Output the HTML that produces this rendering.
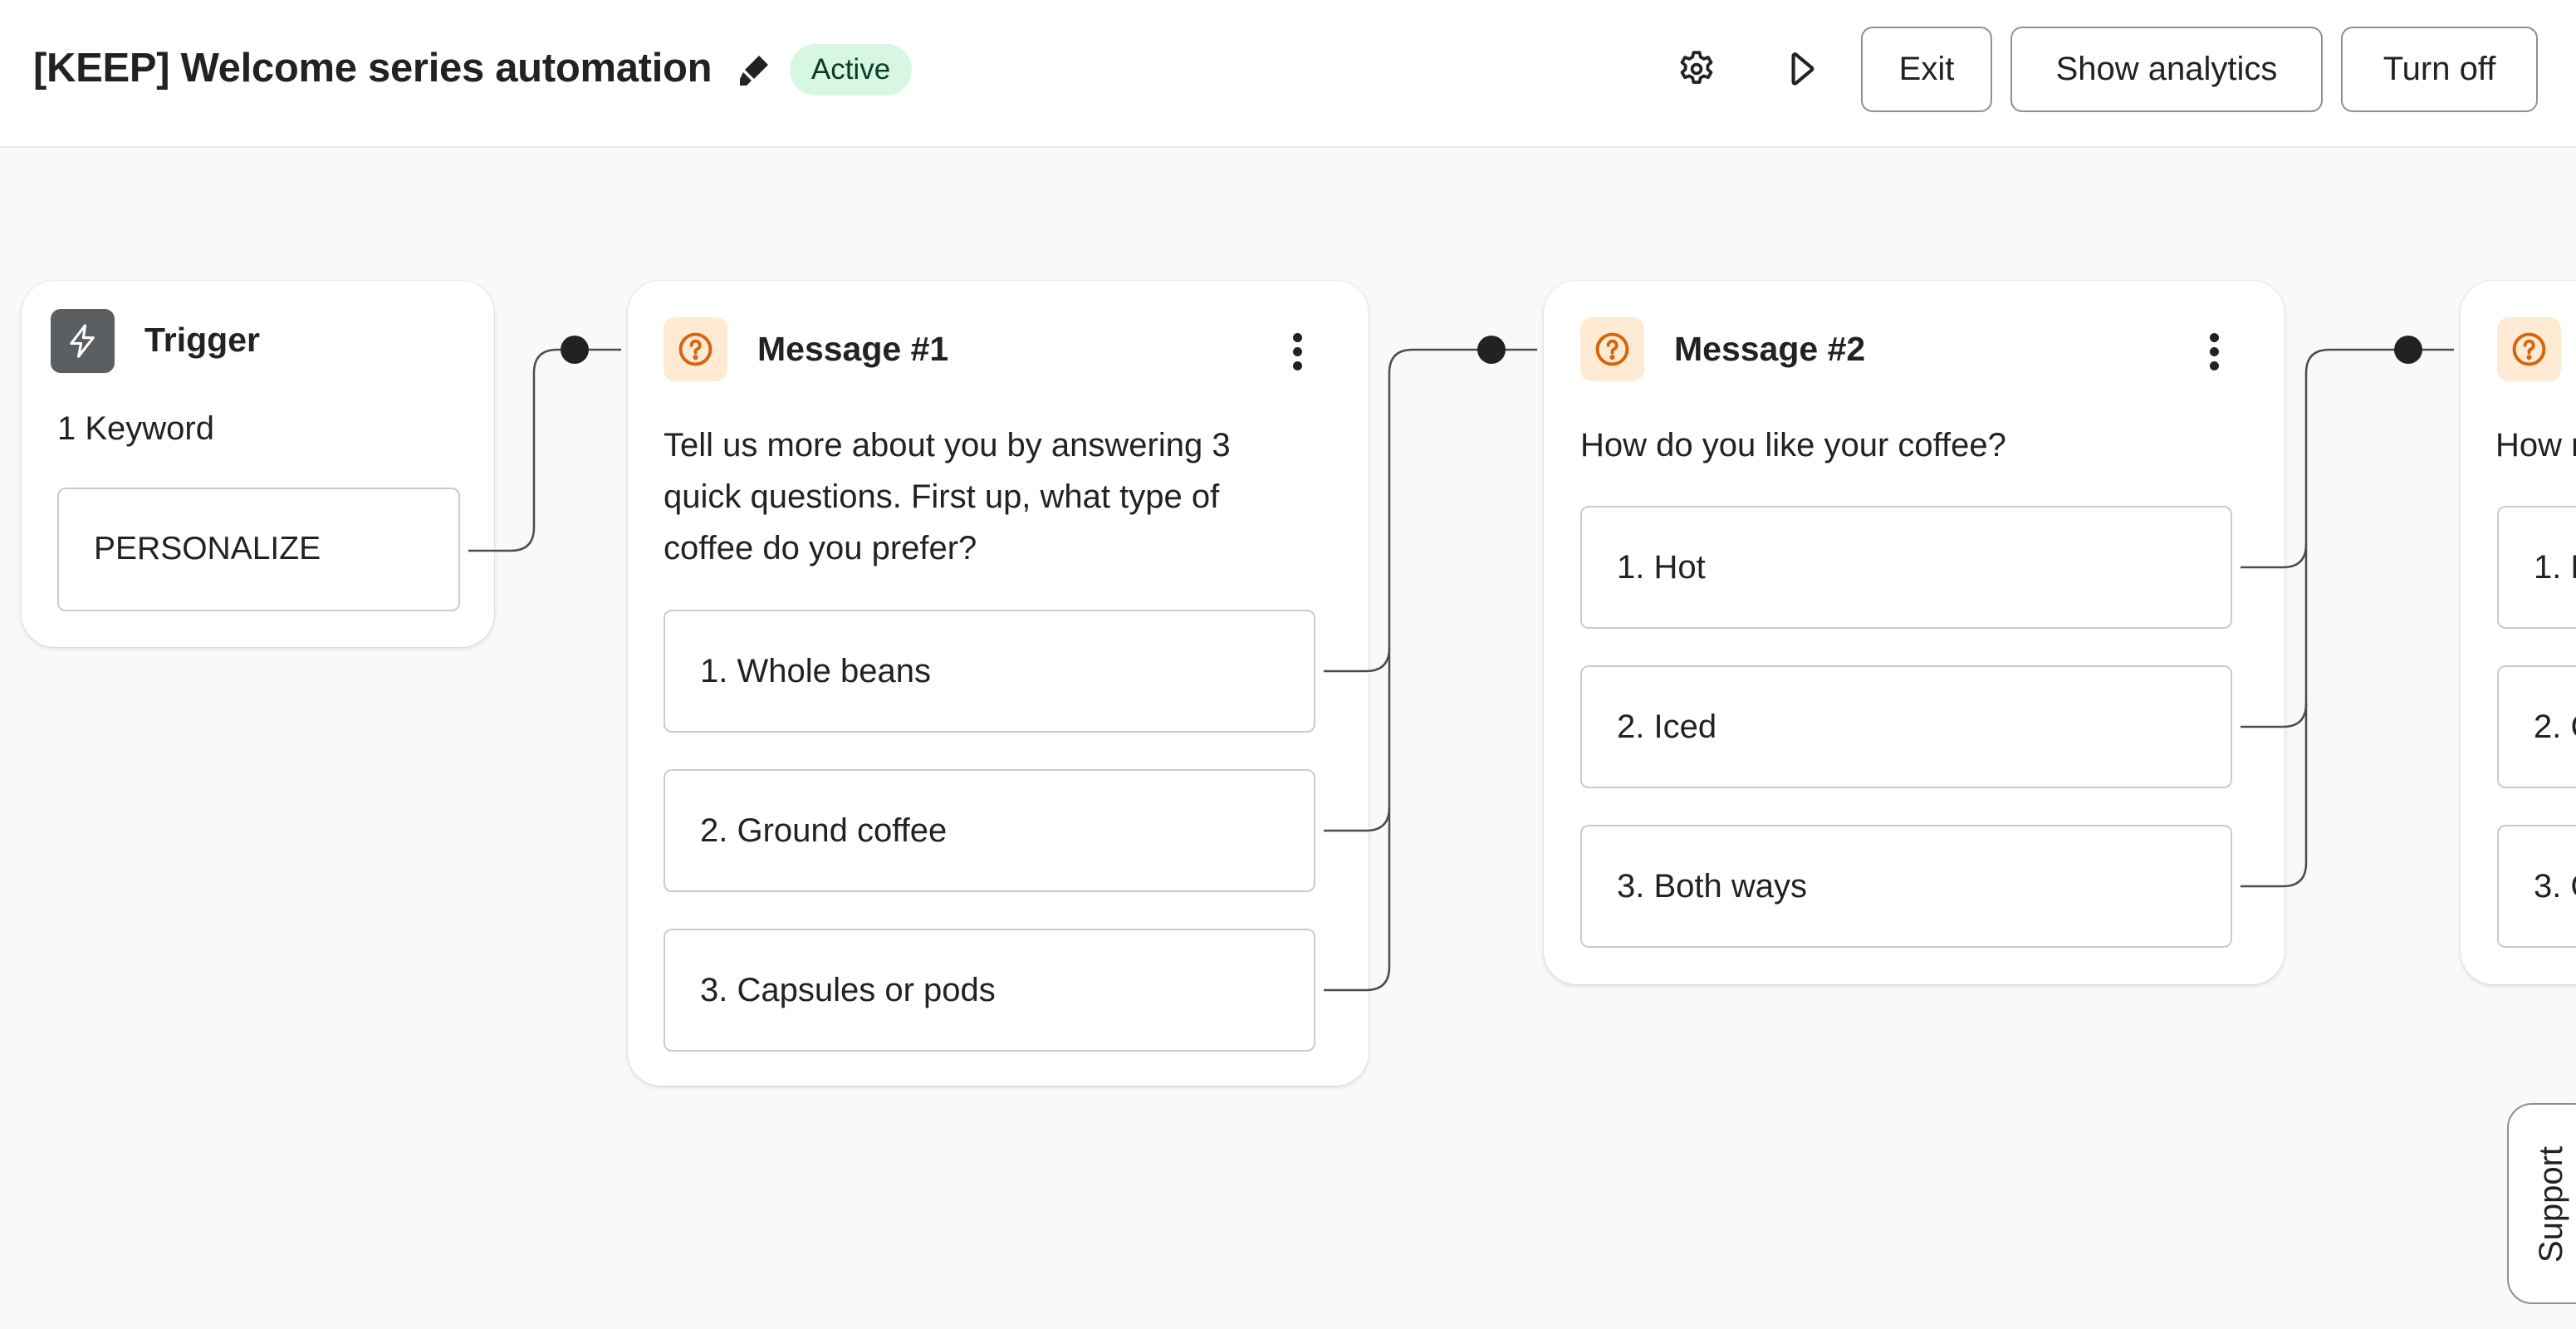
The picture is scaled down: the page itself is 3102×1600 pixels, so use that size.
<!DOCTYPE html>
<html><head><meta charset="utf-8"><style>
*{box-sizing:border-box;margin:0;padding:0}
html,body{width:3102px;height:1600px;overflow:hidden;background:#f8f9fa;font-family:"Liberation Sans",sans-serif;color:#202223}
#wrap{position:relative;width:3102px;height:1600px;overflow:hidden}
.hdr{position:absolute;left:0;top:0;width:3102px;height:178px;background:#fff;border-bottom:2px solid #e8eaeb}
.title{position:absolute;left:40px;top:51px;font-size:49px;letter-spacing:-0.3px;font-weight:700;line-height:62px;white-space:nowrap}
.badge{position:absolute;left:951px;top:53px;width:147px;height:62px;border-radius:31px;background:#d7f7e3;font-size:35px;line-height:62px;text-align:center;color:#0b3b22}
.btn{position:absolute;top:32px;height:103px;border:2px solid #8c9196;border-radius:14px;background:#fff;font-size:40px;line-height:99px;text-align:center}
.card{position:absolute;background:#fff;border-radius:40px;box-shadow:0 2px 6px rgba(0,0,0,.12),0 0 0 1px rgba(0,0,0,.04)}
.opt{position:absolute;background:#fff;border:2px solid #c9cccf;border-radius:10px;font-size:40px;line-height:144px;padding-left:42px;white-space:nowrap;overflow:hidden}
.ctitle{position:absolute;font-size:41px;font-weight:700}
.ico{position:absolute;width:77px;height:77px;border-radius:14px;background:#ffead3}
.body{position:absolute;font-size:40px;line-height:62px;white-space:nowrap}
.kebab{position:absolute;width:12px}
.kebab i{display:block;width:11px;height:11px;border-radius:50%;background:#202223;margin-bottom:6px}
</style></head><body><div id="wrap">
<div class="hdr">
  <div class="title">[KEEP] Welcome series automation</div>
  <svg style="position:absolute;left:888px;top:64px" width="40" height="40" viewBox="0 0 20 20"><path d="M13 1.5l5.5 5.5-8.5 8.5-5.5-5.5z" fill="#202223"/><path d="M3.5 11.5l5 5-3 3H1.5v-4z" fill="#202223"/><path d="M4 11l5.5 5.5" stroke="#fff" stroke-width="1.2"/></svg>
  <div class="badge">Active</div>
  <svg style="position:absolute;left:2018px;top:58px" width="50" height="50" viewBox="0 0 24 24" fill="none" stroke="#202223" stroke-width="1.8" stroke-linejoin="round"><path d="M10.3 2.5h3.4l.6 2.6 1.9 1.1 2.5-.9 1.7 2.9-2 1.8v2.2l2 1.8-1.7 2.9-2.5-.9-1.9 1.1-.6 2.6h-3.4l-.6-2.6-1.9-1.1-2.5.9-1.7-2.9 2-1.8V10l-2-1.8 1.7-2.9 2.5.9 1.9-1.1z"/><circle cx="12" cy="12" r="2.6"/></svg>
  <svg style="position:absolute;left:2145px;top:58px" width="50" height="50" viewBox="0 0 24 24" fill="none" stroke="#202223" stroke-width="2" stroke-linejoin="round"><path d="M7 4.5v15c0 .8.9 1.2 1.5.7l9-7.5c.5-.4.5-1.1 0-1.5l-9-7.5C7.9 3.2 7 3.7 7 4.5z"/></svg>
  <div class="btn" style="left:2241px;width:158px">Exit</div>
  <div class="btn" style="left:2421px;width:376px">Show analytics</div>
  <div class="btn" style="left:2819px;width:237px">Turn off</div>
</div>

<div class="card" style="left:26px;top:338px;width:569px;height:441px">
  <div style="position:absolute;left:35px;top:34px;width:77px;height:77px;border-radius:12px;background:#5c5f62"></div>
  <svg style="position:absolute;left:50px;top:49px" width="47" height="47" viewBox="0 0 24 24" fill="none" stroke="#fff" stroke-width="1.6" stroke-linejoin="round"><path d="M13.5 2.5L5 13.5h6l-1.5 8 9-11.5h-6z"/></svg>
  <div class="ctitle" style="left:148px;top:48px">Trigger</div>
  <div class="body" style="left:43px;top:147px">1 Keyword</div>
  <div class="opt" style="left:43px;top:249px;width:485px;height:149px;font-size:39px">PERSONALIZE</div>
</div>

<div class="card" style="left:756px;top:338px;width:892px;height:969px">
  <div class="ico" style="left:43px;top:44px"></div>
  <svg style="position:absolute;left:60px;top:61px" width="43" height="43" viewBox="0 0 24 24" fill="none" stroke="#d3660e" stroke-width="2.2"><circle cx="12" cy="12" r="10"/><path d="M9.3 9.3a2.8 2.8 0 1 1 3.9 2.6c-.8.4-1.2.9-1.2 1.8v.6" stroke-linecap="round"/><circle cx="12" cy="17.4" r=".6" fill="#d3660e"/></svg>
  <div class="ctitle" style="left:156px;top:59px">Message #1</div>
  <div class="kebab" style="left:801px;top:63px"><i></i><i></i><i></i></div>
  <div class="body" style="left:43px;top:167px">Tell us more about you by answering 3<br>quick questions. First up, what type of<br>coffee do you prefer?</div>
  <div class="opt" style="left:43px;top:396px;width:785px;height:148px">1. Whole beans</div>
  <div class="opt" style="left:43px;top:588px;width:785px;height:148px">2. Ground coffee</div>
  <div class="opt" style="left:43px;top:780px;width:785px;height:148px">3. Capsules or pods</div>
</div>

<div class="card" style="left:1859px;top:338px;width:892px;height:847px">
  <div class="ico" style="left:44px;top:44px"></div>
  <svg style="position:absolute;left:61px;top:61px" width="43" height="43" viewBox="0 0 24 24" fill="none" stroke="#d3660e" stroke-width="2.2"><circle cx="12" cy="12" r="10"/><path d="M9.3 9.3a2.8 2.8 0 1 1 3.9 2.6c-.8.4-1.2.9-1.2 1.8v.6" stroke-linecap="round"/><circle cx="12" cy="17.4" r=".6" fill="#d3660e"/></svg>
  <div class="ctitle" style="left:157px;top:59px">Message #2</div>
  <div class="kebab" style="left:802px;top:63px"><i></i><i></i><i></i></div>
  <div class="body" style="left:44px;top:167px">How do you like your coffee?</div>
  <div class="opt" style="left:44px;top:271px;width:785px;height:148px">1. Hot</div>
  <div class="opt" style="left:44px;top:463px;width:785px;height:148px">2. Iced</div>
  <div class="opt" style="left:44px;top:655px;width:785px;height:148px">3. Both ways</div>
</div>

<div class="card" style="left:2963px;top:338px;width:892px;height:847px">
  <div class="ico" style="left:44px;top:44px"></div>
  <svg style="position:absolute;left:61px;top:61px" width="43" height="43" viewBox="0 0 24 24" fill="none" stroke="#d3660e" stroke-width="2.2"><circle cx="12" cy="12" r="10"/><path d="M9.3 9.3a2.8 2.8 0 1 1 3.9 2.6c-.8.4-1.2.9-1.2 1.8v.6" stroke-linecap="round"/><circle cx="12" cy="17.4" r=".6" fill="#d3660e"/></svg>
  <div class="body" style="left:42px;top:167px">How much milk?</div>
  <div class="opt" style="left:44px;top:271px;width:785px;height:148px">1. Milk</div>
  <div class="opt" style="left:44px;top:463px;width:785px;height:148px">2. Cream</div>
  <div class="opt" style="left:44px;top:655px;width:785px;height:148px">3. Oat</div>
</div>

<svg style="position:absolute;left:0;top:0;z-index:5" width="3102" height="1600" fill="none" stroke="#4a4d50" stroke-width="2.5">
  <path d="M564 663H615q28 0 28-28V449q0-28 28-28H748"/>
  <circle cx="692" cy="421" r="17" fill="#202223" stroke="none"/>
  <path d="M1594 808h51q28 0 28-28V449q0-28 28-28H1851"/>
  <path d="M1594 1000h51q28 0 28-28"/>
  <path d="M1594 1192h51q28 0 28-28V780"/>
  <circle cx="1796" cy="421" r="17" fill="#202223" stroke="none"/>
  <path d="M2698 683h51q28 0 28-28V449q0-28 28-28H2955"/>
  <path d="M2698 875h51q28 0 28-28"/>
  <path d="M2698 1067h51q28 0 28-28V655"/>
  <circle cx="2900" cy="421" r="17" fill="#202223" stroke="none"/>
</svg>

<div style="position:absolute;left:3019px;top:1328px;width:110px;height:242px;background:#fff;border:2px solid #8c9196;border-radius:30px"></div>
<div style="position:absolute;left:3072px;top:1450px;width:200px;text-align:center;margin-left:-100px;margin-top:-24px;line-height:48px;transform:rotate(-90deg);font-size:40px">Support</div>
</div></body></html>
